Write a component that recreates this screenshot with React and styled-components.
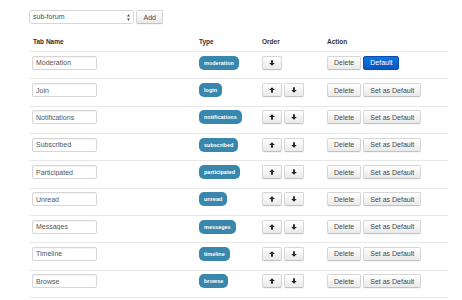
import React from 'react';
import styled, { createGlobalStyle, css } from 'styled-components';

const GlobalStyle = createGlobalStyle`
  html, body {
    margin: 0;
    padding: 0;
    background: #fff;
  }
  body {
    font-family: "Liberation Sans", Arial, Helvetica, sans-serif;
    color: #333;
  }
`;

const Page = styled.div`
  padding: 10px 14px 0 29px;
  width: 419px;
`;

const AddForm = styled.form`
  display: flex;
  align-items: center;
  gap: 2px;
  margin: 0 0 7px;
`;

const SelectBox = styled.label`
  position: relative;
  display: block;
  box-sizing: border-box;
  width: 105px;
  height: 14px;
  border: 1px solid #d6d6d6;
  border-radius: 3px;
  background: #fff;
  overflow: hidden;
`;

const Select = styled.select`
  appearance: none;
  -webkit-appearance: none;
  display: block;
  box-sizing: border-box;
  width: 100%;
  height: 12px;
  min-height: 0;
  margin: 0;
  padding: 0 10px 0 3px;
  border: 0;
  background: transparent;
  color: #4a4a4a;
  font: 7px/12px "Liberation Sans", Arial, sans-serif;
  outline: none;
`;

const SelectCaret = styled.svg`
  position: absolute;
  right: 3px;
  top: 2.5px;
  pointer-events: none;
`;

const Button = styled.button`
  box-sizing: border-box;
  height: 14px;
  margin: 0;
  padding: 0 6px;
  display: inline-flex;
  align-items: center;
  justify-content: center;
  border: 1px solid #d6d6d6;
  border-bottom-color: #c2c2c2;
  border-radius: 2px;
  background: linear-gradient(#ffffff, #e9e9e9);
  box-shadow: 0 1px 1px rgba(0, 0, 0, 0.04);
  color: #4a4a4a;
  font: 7px "Liberation Sans", Arial, sans-serif;
  line-height: 1;
  white-space: nowrap;
  cursor: pointer;

  ${({ $primary }) =>
    $primary &&
    css`
      border-color: #0a4fb0;
      background: linear-gradient(#0b78d9, #0656c6);
      color: #fff;
    `}

  ${({ $icon }) =>
    $icon &&
    css`
      width: 20px;
      padding: 0;
    `}
`;

const AddButton = styled(Button)`
  padding: 0 6.5px;
`;

const Row = styled.div`
  display: grid;
  grid-template-columns: 166px 63px 65px 125px;
  align-items: start;
  box-sizing: border-box;
  height: 27.33px;
  padding-top: 3.7px;
  border-bottom: 1px solid #e8e8e8;
`;

const HeadRow = styled(Row)`
  height: 21px;
  padding-top: 7px;
`;

const HeadCell = styled.div`
  padding: 0 4px;
  font-size: 6.5px;
  font-weight: bold;
  line-height: 8px;
  color: #333;
`;

const Cell = styled.div`
  display: flex;
  align-items: center;
  gap: ${({ $gap }) => $gap || 0}px;
  padding: 0 4px;
`;

const NameInput = styled.input`
  box-sizing: border-box;
  width: 65px;
  height: 14px;
  margin: 0 0 0 -1px;
  padding: 0 3px;
  border: 1px solid #d6d6d6;
  border-radius: 2px;
  box-shadow: inset 0 1px 1px rgba(0, 0, 0, 0.05);
  color: #555;
  font: 7px "Liberation Sans", Arial, sans-serif;
  outline: none;
`;

const Badge = styled.span`
  display: inline-flex;
  align-items: center;
  height: 14px;
  padding: 0 5px;
  border-radius: 5px;
  background: #3a87ad;
  color: #fff;
  font-size: 5.5px;
  font-weight: bold;
  white-space: nowrap;
`;

const ArrowIcon = ({ up }) => (
  <svg width="6" height="6" viewBox="0 0 6 6">
    <g transform={up ? '' : 'rotate(180 3 3)'} fill="#222">
      <path d="M3 0.2 L5.8 3 L3.9 3 L3.9 5.8 L2.1 5.8 L2.1 3 L0.2 3 Z" />
    </g>
  </svg>
);

const tabs = [
  { name: 'Moderation', type: 'moderation', first: true, isDefault: true },
  { name: 'Join', type: 'login' },
  { name: 'Notifications', type: 'notifications' },
  { name: 'Subscribed', type: 'subscribed' },
  { name: 'Participated', type: 'participated' },
  { name: 'Unread', type: 'unread' },
  { name: 'Messages', type: 'messages' },
  { name: 'Timeline', type: 'timeline' },
  { name: 'Browse', type: 'browse' },
];

export default function App() {
  return (
    <Page>
      <GlobalStyle />
      <AddForm onSubmit={(e) => e.preventDefault()}>
        <SelectBox>
          <Select defaultValue="sub-forum">
            <option value="sub-forum">sub-forum</option>
          </Select>
          <SelectCaret width="3" height="7" viewBox="0 0 3 7">
            <path d="M1.5 0 L3 2.6 L0 2.6 Z M1.5 7 L3 4.4 L0 4.4 Z" fill="#555" />
          </SelectCaret>
        </SelectBox>
        <AddButton type="submit">Add</AddButton>
      </AddForm>

      <HeadRow>
        <HeadCell>Tab Name</HeadCell>
        <HeadCell>Type</HeadCell>
        <HeadCell>Order</HeadCell>
        <HeadCell>Action</HeadCell>
      </HeadRow>

      {tabs.map((tab) => (
        <Row key={tab.type}>
          <Cell>
            <NameInput defaultValue={tab.name} />
          </Cell>
          <Cell>
            <Badge>{tab.type}</Badge>
          </Cell>
          <Cell $gap={2}>
            {!tab.first && (
              <Button $icon type="button">
                <ArrowIcon up />
              </Button>
            )}
            <Button $icon type="button">
              <ArrowIcon />
            </Button>
          </Cell>
          <Cell $gap={2}>
            <Button type="button">Delete</Button>
            {tab.isDefault ? (
              <Button $primary type="button">Default</Button>
            ) : (
              <Button type="button">Set as Default</Button>
            )}
          </Cell>
        </Row>
      ))}
    </Page>
  );
}
